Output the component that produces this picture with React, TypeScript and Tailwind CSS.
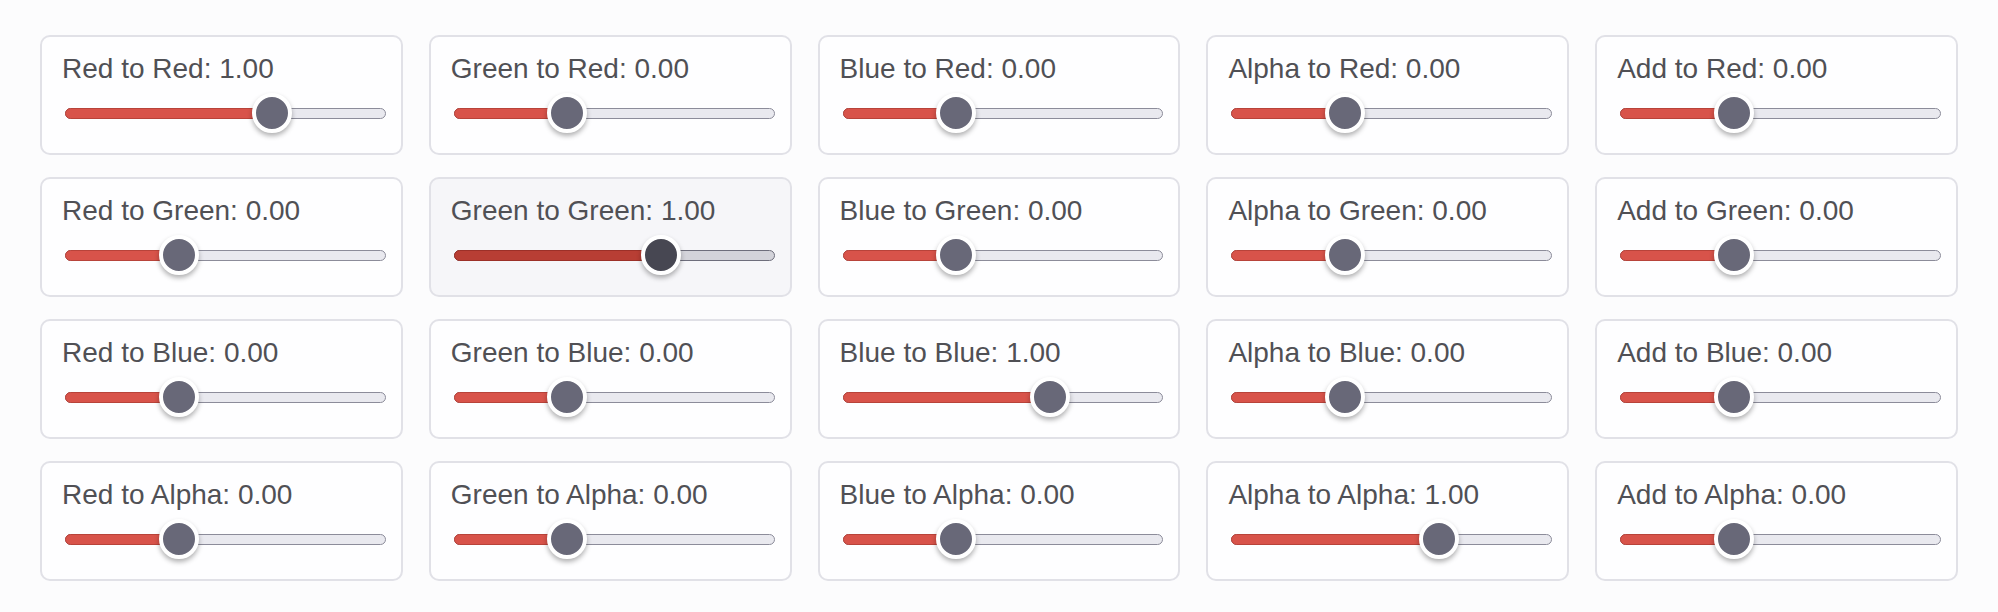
const channels = ['Red', 'Green', 'Blue', 'Alpha']
const sources = ['Red', 'Green', 'Blue', 'Alpha', 'Add']

// slider range is -1..2, thumb travel is track width minus thumb size
function Slider({ value, active }: { value: number; active: boolean }) {
  const frac = (value + 1) / 3
  const pos = `calc(20px + (100% - 40px) * ${frac})`
  return (
    <div className="relative mt-[8px] ml-[23px] mr-[15px] h-[40px]">
      <div
        className={
          'absolute left-0 right-0 top-[14.5px] h-[11px] rounded-full border ' +
          (active ? 'bg-[#d3d3da] border-[#6e6e7c]' : 'bg-[#e9e9ef] border-[#8c8c9a]')
        }
      />
      <div
        className={
          'absolute left-0 top-[14.5px] h-[11px] rounded-full border ' +
          (active ? 'bg-[#b83e34] border-[#9c3028]' : 'bg-[#d8534a] border-[#b8433a]')
        }
        style={{ width: pos }}
      />
      <div
        className={
          'absolute top-0 h-[40px] w-[40px] -translate-x-1/2 rounded-full border-[4px] border-white shadow-[0_3px_5px_rgba(0,0,0,0.3)] ' +
          (active ? 'bg-[#474752]' : 'bg-[#686878]')
        }
        style={{ left: pos }}
      />
    </div>
  )
}

function Card({ label, value, active }: { label: string; value: number; active: boolean }) {
  return (
    <div
      className={
        'h-[120px] rounded-[10px] border-2 border-[#e1e1e7] pt-[16px] ' +
        (active ? 'bg-[#f6f6f9]' : 'bg-[#fefeff]')
      }
    >
      <div className="pl-[20px] text-[28px] leading-[32px] text-[#505055] whitespace-nowrap">
        {label}: {value.toFixed(2)}
      </div>
      <Slider value={value} active={active} />
    </div>
  )
}

export default function App() {
  return (
    <div
      className="min-h-[612px] w-full bg-[#fcfcfd] px-[40px] pt-[35px] pb-[31px]"
      style={{ fontFamily: '"Liberation Sans", Arial, sans-serif' }}
    >
      <div className="grid grid-cols-5 gap-x-[26px] gap-y-[22px]">
        {channels.map((target, ti) =>
          sources.map((src, si) => (
            <Card
              key={target + src}
              label={`${src} to ${target}`}
              value={si === ti ? 1 : 0}
              active={target === 'Green' && src === 'Green'}
            />
          ))
        )}
      </div>
    </div>
  )
}
